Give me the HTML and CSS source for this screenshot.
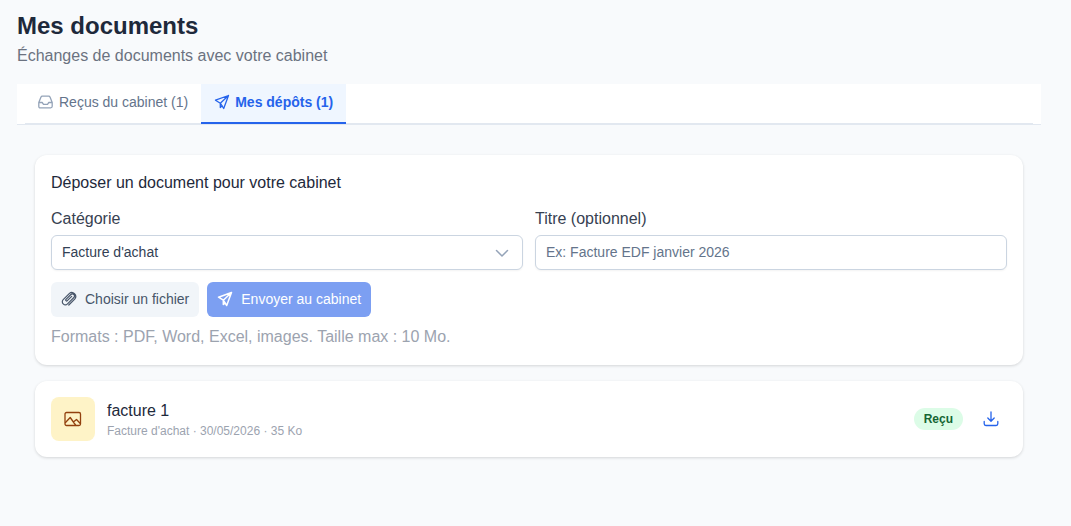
FILE: index.html
```html
<!DOCTYPE html>
<html lang="fr">
<head>
    <meta charset="UTF-8">
    <meta name="viewport" content="width=device-width, initial-scale=1.0">
    <title>Mes documents</title>
    <link rel="stylesheet" href="styles.css">
</head>
<body>

<main class="page">
    <header class="page-header">
        <h1>Mes documents</h1>
        <p>Échanges de documents avec votre cabinet</p>
    </header>

    <div class="tabs">
        <div class="tab-list" role="tablist">
            <button type="button" class="tab" role="tab" aria-selected="false">
                <svg class="icon" viewBox="0 0 16 16"><path d="M.8 8.500 2.900 3.200Q3.300 2.200 4.400 2.200h6.200q1.100 0 1.500 1l2.100 5.300v3.800q0 1.500-1.500 1.500H2.300q-1.500 0-1.500-1.500zM.8 8.500h3.400l1.300 1.800h4l1.300-1.800h3.400"/></svg>
                <span>Reçus du cabinet (1)</span>
            </button>
            <button type="button" class="tab active" role="tab" aria-selected="true">
                <svg class="icon" viewBox="0 0 16 16"><path d="M14.500 1.500 1.500 6.200l4.800 3L9.700 14.500zM6.300 9.200 14.500 1.500M6.300 9.200v4.300l1.900-1.700"/></svg>
                <span>Mes dépôts (1)</span>
            </button>
        </div>
    </div>

    <div class="panel" role="tabpanel">
        <form class="card upload-form">
            <h2>Déposer un document pour votre cabinet</h2>
            <div class="fields">
                <div class="field">
                    <label for="category">Catégorie</label>
                    <div class="select-wrap">
                        <select id="category">
                            <option>Facture d'achat</option>
                        </select>
                        <svg class="chevron" viewBox="0 0 14 14"><path d="m1.500 4.500 5.500 5.500 5.500-5.500"/></svg>
                    </div>
                </div>
                <div class="field">
                    <label for="doc-title">Titre (optionnel)</label>
                    <input type="text" id="doc-title" placeholder="Ex: Facture EDF janvier 2026">
                </div>
            </div>
            <div class="actions">
                <button type="button" class="btn btn-secondary">
                    <svg class="icon clip" viewBox="0 0 16 16"><path d="M10.700 5.300 6.300 9.700a.9.900 0 0 1-1.300-1.300l4.900-4.900a2.100 2.100 0 0 1 3 3l-6.400 6.400a3 3 0 0 1-4.300-4.300l6-6a3.900 3.900 0 0 1 5.500 5.500l-5.900 5.900"/></svg>
                    <span>Choisir un fichier</span>
                </button>
                <button type="submit" class="btn btn-primary" disabled>
                    <svg class="icon" viewBox="0 0 16 16"><path d="M14.500 1.500 1.500 6.200l4.800 3L9.700 14.500zM6.300 9.200 14.500 1.500M6.300 9.200v4.300l1.900-1.700"/></svg>
                    <span>Envoyer au cabinet</span>
                </button>
            </div>
            <p class="hint">Formats : PDF, Word, Excel, images. Taille max : 10 Mo.</p>
        </form>

        <article class="card document">
            <div class="doc-icon">
                <svg viewBox="0 0 18 18"><rect x="1" y="2.500" width="15.500" height="13" rx="1.500"/><path d="m1.500 12.500 4.700-5 5.300 7.500M9.400 12l3.100-2.500 3.800 4"/></svg>
            </div>
            <div class="doc-info">
                <h3>facture 1</h3>
                <p>Facture d'achat · 30/05/2026 · 35 Ko</p>
            </div>
            <span class="badge">Reçu</span>
            <button type="button" class="download-btn" aria-label="Télécharger">
                <svg class="icon" viewBox="0 0 16 16"><path d="M8 1v9M4.800 7 8 10.200 11.200 7M1.200 10.500v2.300q0 1.700 1.700 1.700h10.200q1.700 0 1.700-1.700v-2.300"/></svg>
            </button>
        </article>
    </div>
</main>

</body>
</html>
```

FILE: styles.css
```css
* {
    box-sizing: border-box;
    margin: 0;
    padding: 0;
}

body {
    background-color: #f8fafc;
    color: #1e293b;
    font-family: "Liberation Sans", Arial, sans-serif;
    font-size: 16px;
    line-height: 20px;
}

button, input, select {
    font-family: inherit;
    font-size: 14px;
}

svg {
    fill: none;
    stroke: currentColor;
    stroke-linecap: round;
    stroke-linejoin: round;
}

.icon {
    width: 16px;
    height: 16px;
    flex-shrink: 0;
    stroke-width: 1.3;
}

.page {
    padding: 12px 30px 24px 17px;
}

.page-header {
    margin-bottom: 18px;
}

.page-header h1 {
    font-size: 24px;
    line-height: 28px;
    margin-bottom: 6px;
}

.page-header p {
    color: #6b7280;
}

.tabs {
    background-color: #fff;
    border-bottom: 1px solid #e2e8f0;
    padding: 0 8px;
}

.tab-list {
    display: flex;
    border-bottom: 1px solid #e2e8f0;
}

.tab {
    display: flex;
    align-items: center;
    gap: 5px;
    height: 40px;
    margin-bottom: -1px;
    padding: 0 13px 2px;
    background: none;
    border: none;
    border-bottom: 2px solid transparent;
    color: #64748b;
    cursor: pointer;
}

.tab .icon {
    color: #94a3b8;
}

.tab.active {
    background-color: #eff6ff;
    border-bottom-color: #2563eb;
    color: #2563eb;
    font-weight: bold;
}

.tab.active .icon {
    color: #2563eb;
}

.panel {
    display: flex;
    flex-direction: column;
    gap: 16px;
    padding: 30px 18px;
}

.card {
    padding: 16px;
    background-color: #fff;
    border-radius: 12px;
    box-shadow: 0 1px 3px rgba(0, 0, 0, 0.15);
}

.upload-form {
    display: flex;
    flex-direction: column;
    gap: 12px;
}

.upload-form h2 {
    font-size: 16px;
    font-weight: normal;
    line-height: 24px;
}

.fields {
    display: grid;
    grid-template-columns: 1fr 1fr;
    gap: 12px;
}

.field {
    display: flex;
    flex-direction: column;
    gap: 4px;
}

.field label {
    color: #374151;
    line-height: 24px;
}

.field input,
.field select {
    width: 100%;
    height: 35px;
    padding: 0 10px 2px;
    background-color: #fff;
    border: 1px solid #cbd5e1;
    border-radius: 6px;
    box-shadow: 0 1px 2px rgba(18, 18, 23, 0.05);
    color: #334155;
}

.field input::placeholder {
    color: #64748b;
}

.field select {
    display: block;
    appearance: none;
}

.select-wrap {
    position: relative;
}

.chevron {
    position: absolute;
    top: 11px;
    right: 14px;
    width: 14px;
    height: 14px;
    color: #94a3b8;
    stroke-width: 1.5;
    pointer-events: none;
}

.actions {
    display: flex;
    gap: 8px;
}

.btn {
    display: flex;
    align-items: center;
    gap: 8px;
    height: 35px;
    padding: 0 10px 1px;
    border: none;
    border-radius: 6px;
    cursor: pointer;
}

.btn .icon {
    stroke-width: 1.5;
}

.btn .clip {
    stroke-width: 1.2;
}

.btn-secondary {
    background-color: #f1f5f9;
    color: #475569;
}

.btn-primary {
    background-color: #7c9ff2;
    color: #fff;
}

.hint {
    color: #9ca3af;
    line-height: 16px;
    padding-bottom: 4px;
}

.document {
    display: flex;
    align-items: center;
}

.doc-icon {
    display: flex;
    align-items: center;
    justify-content: center;
    width: 44px;
    height: 44px;
    margin-right: 12px;
    background-color: #fef3c7;
    border-radius: 8px;
    color: #92400e;
}

.doc-icon svg {
    width: 18px;
    height: 18px;
    stroke-width: 1.3;
}

.doc-info {
    flex: 1;
}

.doc-info h3 {
    font-size: 16px;
    font-weight: normal;
    line-height: 24px;
}

.doc-info p {
    color: #9ca3af;
    font-size: 12px;
    line-height: 16px;
}

.badge {
    margin-right: 12px;
    padding: 3px 10px;
    background-color: #dcfce7;
    border-radius: 12px;
    color: #166534;
    font-size: 12px;
    font-weight: bold;
    line-height: 16px;
}

.download-btn {
    display: flex;
    padding: 8px;
    background: none;
    border: none;
    color: #2563eb;
    cursor: pointer;
}
```
